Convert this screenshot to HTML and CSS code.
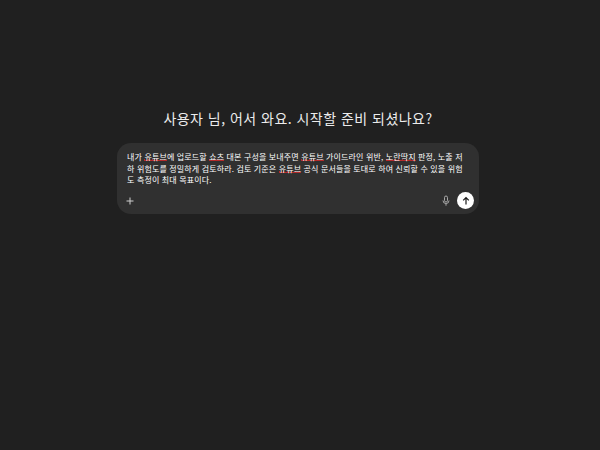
FILE: index.html
```html
<!DOCTYPE html>
<html lang="ko">
<head>
<meta charset="utf-8">
<title>새 채팅</title>
<link rel="stylesheet" href="styles.css">
</head>
<body>
<main class="page">
  <h1 class="title">사용자 님, 어서 와요. 시작할 준비 되셨나요?</h1>
  <section class="composer">
    <p class="prompt">내가 <span class="typo">유튜브</span>에 업로드할 <span class="typo">쇼츠</span> 대본 구성을 보내주면 <span class="typo">유튜브</span> 가이드라인 위반, <span class="typo">노란딱지</span> 판정, 노출 저하 위험도를 정밀하게 검토하라. 검토 기준은 <span class="typo">유튜브</span> 공식 문서들을 토대로 하여 신뢰할 수 있을 위험도 측정이 최대 목표이다.</p>
    <div class="actions">
      <svg class="icon plus" viewBox="0 0 10 10" width="10" height="10" aria-label="추가"><path d="M5 1.5v7M1.5 5h7"/></svg>
      <div class="right">
        <svg class="icon mic" viewBox="0 0 10 12" width="10" height="12" aria-label="음성"><rect x="3.5" y="1" width="3" height="6" rx="1.5"/><path d="M2 5.5a3 3 0 0 0 6 0M5 8.5v2.2"/></svg>
        <button class="send" type="button" aria-label="보내기">
          <svg viewBox="0 0 10 10" width="10" height="10"><path d="M5 8.5V1.8M2.2 4.4 5 1.6l2.8 2.8"/></svg>
        </button>
      </div>
    </div>
  </section>
</main>
</body>
</html>
```

FILE: styles.css
```css
html, body {
  margin: 0;
  height: 100%;
}
body {
  background: #202020;
  color: #ececec;
  font-family: "Noto Sans CJK KR", "Noto Sans", sans-serif;
}
.page {
  box-sizing: border-box;
  width: 596px;
  height: 450px;
  padding-top: 107px;
  display: flex;
  flex-direction: column;
  align-items: center;
}
.title {
  margin: 0 0 14px;
  font-size: 14px;
  line-height: 22px;
  font-weight: 400;
  letter-spacing: 0.47px;
  color: #ececec;
}
.composer {
  box-sizing: border-box;
  width: 362px;
  height: 71px;
  padding: 8px 5px 5px 10px;
  border-radius: 14px;
  background: #303030;
  display: flex;
  flex-direction: column;
  justify-content: space-between;
}
.prompt {
  margin: 0;
  padding-right: 5px;
  font-size: 8px;
  line-height: 11.6px;
  letter-spacing: 0.14px;
  color: #ffffff;
}
.typo {
  background-image:
    linear-gradient(#b32a2a, #b32a2a),
    repeating-linear-gradient(90deg, #b32a2a 0 1px, transparent 1px 4px);
  background-size: 100% 1px, 100% 1px;
  background-position: 0 calc(100% - 1px), 0 calc(100% - 2px);
  background-repeat: no-repeat;
}
.actions {
  display: flex;
  align-items: center;
  justify-content: space-between;
}
.right {
  display: flex;
  align-items: center;
  gap: 6px;
}
.icon {
  fill: none;
  stroke: #a8a8a8;
  stroke-width: 1;
}
.plus {
  margin-left: -2px;
  stroke: #cfcfcf;
}
.send {
  width: 17px;
  height: 17px;
  padding: 0;
  border: 0;
  border-radius: 50%;
  background: #ffffff;
  display: flex;
  align-items: center;
  justify-content: center;
}
.send svg {
  fill: none;
  stroke: #1a1a1a;
  stroke-width: 1.2;
}
```
